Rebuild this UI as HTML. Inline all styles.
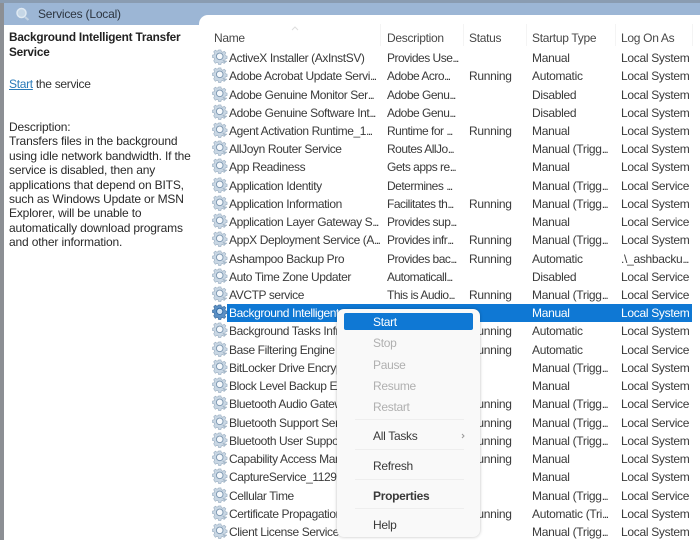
<!DOCTYPE html>
<html><head><meta charset="utf-8"><style>
html,body{margin:0;padding:0;background:#fff}
#p{position:relative;width:700px;height:540px;overflow:hidden;background:#fff;font-family:"Liberation Sans",sans-serif;font-size:12px;letter-spacing:-.3px;color:#3a3a3a;filter:blur(.3px)}
#p div{position:absolute;white-space:nowrap}
.r{left:0;width:700px;height:18px;line-height:18px}
.r span{position:absolute;top:0}
.r i{font-style:normal;letter-spacing:-1.5px}
.n{left:229px;letter-spacing:-.4px}.d{left:387px;letter-spacing:-.5px}.s{left:469px}.t{left:532px}.l{left:621px}
.r svg{position:absolute;left:212px;top:0;width:16px;height:16px}
.h{top:30px;line-height:16px;color:#484848}
.sep{top:24px;width:1px;height:22px;background:#f4f4f4}
.m{left:373px;line-height:16px;color:#3a3a3a}
.g{color:#b0b0b0}
.ms{left:355px;width:109px;height:1px;background:#eeeeee}
.dt{left:9px;line-height:14.4px;color:#2a2a2a;letter-spacing:-.16px}
</style></head><body><div id="p">
<svg width="0" height="0" style="position:absolute"><defs>
<symbol id="g" viewBox="0 0 17 17">
<path d="M7 1h2.500l.4 1.800 1.500.6 1.600-1 1.700 1.700-1 1.600.6 1.500 1.700.4v2.500l-1.800.4-.6 1.500 1 1.600-1.700 1.700-1.600-1-1.500.6-.4 1.600H7l-.4-1.700-1.500-.6-1.600 1L1.800 12.500l1-1.600-.6-1.500L.5 9V6.500l1.700-.4.6-1.500-1-1.600L3.500 1.300l1.600 1 1.500-.6z" fill="#c9d7e4" stroke="#9fb2c4" stroke-width=".7"/>
<circle cx="8.200" cy="7.800" r="3.500" fill="#f6f9fc" stroke="#7f99b2" stroke-width="1"/>
<path d="M11.500 11.500l1.800 2.300 2.500-1" fill="none" stroke="#a5b7c7" stroke-width="1.200"/>
</symbol>
<symbol id="g2" viewBox="0 0 17 17">
<path d="M7 1h2.500l.4 1.800 1.500.6 1.600-1 1.700 1.700-1 1.600.6 1.500 1.700.4v2.500l-1.800.4-.6 1.500 1 1.600-1.700 1.700-1.600-1-1.500.6-.4 1.600H7l-.4-1.700-1.500-.6-1.600 1L1.800 12.500l1-1.600-.6-1.500L.5 9V6.500l1.700-.4.6-1.500-1-1.600L3.500 1.300l1.600 1 1.500-.6z" fill="#5b8fc4" stroke="#3f6f9f" stroke-width=".7"/>
<circle cx="8.200" cy="7.800" r="3.300" fill="#cfe3f5" stroke="#2f6aa5" stroke-width="1"/>
</symbol></defs></svg>

<div style="left:0;top:0;width:700px;height:3px;background:#8a9cb1"></div>
<div style="left:0;top:3px;width:700px;height:22px;background:#9cb6d5"></div>
<div style="left:0;top:3px;width:4px;height:537px;background:#8c8f94"></div>
<div style="left:4px;top:25px;width:196px;height:515px;background:#fff"></div>
<div style="left:199px;top:15px;width:501px;height:525px;background:#fff;border-radius:9px 0 0 0"></div>

<svg style="position:absolute;left:14px;top:6px" width="17" height="17" viewBox="0 0 17 17"><circle cx="7.500" cy="7" r="4.500" fill="#c5d6e6" stroke="#dfe9f2" stroke-width="1.500"/><path d="M11 11l3.500 3" stroke="#c2d2e2" stroke-width="2"/></svg>
<div style="left:38px;top:6px;line-height:16px;font-size:12px;color:#2c3540;letter-spacing:-.2px">Services (Local)</div>

<div style="left:9px;top:30px;font-weight:bold;line-height:15px;color:#222;letter-spacing:-.2px;font-size:11.800px">Background Intelligent Transfer<br>Service</div>
<div style="left:9px;top:76px;line-height:16px;color:#333"><span style="color:#2a7ab8;text-decoration:underline">Start</span> the service</div>
<div class="dt" style="top:120px">Description:<br>Transfers files in the background<br>using idle network bandwidth. If the<br>service is disabled, then any<br>applications that depend on BITS,<br>such as Windows Update or MSN<br>Explorer, will be unable to<br>automatically download programs<br>and other information.</div>

<div class="h" style="left:214px">Name</div><div class="h" style="left:387px">Description</div><div class="h" style="left:469px">Status</div><div class="h" style="left:532px">Startup Type</div><div class="h" style="left:621px">Log On As</div>
<div class="sep" style="left:380px"></div><div class="sep" style="left:463px"></div><div class="sep" style="left:526px"></div><div class="sep" style="left:615px"></div><div class="sep" style="left:692px"></div>
<svg style="position:absolute;left:291px;top:26px" width="8" height="5"><path d="M1 4l3-3 3 3" fill="none" stroke="#ddd"/></svg>

<div class="r" style="top:49px"><svg><use href="#g"/></svg><span class="n">ActiveX Installer (AxInstSV)</span><span class="d">Provides Use<i>...</i></span><span class="t">Manual</span><span class="l">Local System</span></div>
<div class="r" style="top:67.200px"><svg><use href="#g"/></svg><span class="n">Adobe Acrobat Update Servi<i>...</i></span><span class="d">Adobe Acro<i>...</i></span><span class="s">Running</span><span class="t">Automatic</span><span class="l">Local System</span></div>
<div class="r" style="top:85.500px"><svg><use href="#g"/></svg><span class="n">Adobe Genuine Monitor Ser<i>...</i></span><span class="d">Adobe Genu<i>...</i></span><span class="t">Disabled</span><span class="l">Local System</span></div>
<div class="r" style="top:103.700px"><svg><use href="#g"/></svg><span class="n">Adobe Genuine Software Int<i>...</i></span><span class="d">Adobe Genu<i>...</i></span><span class="t">Disabled</span><span class="l">Local System</span></div>
<div class="r" style="top:121.900px"><svg><use href="#g"/></svg><span class="n">Agent Activation Runtime_1<i>...</i></span><span class="d">Runtime for <i>...</i></span><span class="s">Running</span><span class="t">Manual</span><span class="l">Local System</span></div>
<div class="r" style="top:140.200px"><svg><use href="#g"/></svg><span class="n">AllJoyn Router Service</span><span class="d">Routes AllJo<i>...</i></span><span class="t">Manual (Trigg<i>...</i></span><span class="l">Local System</span></div>
<div class="r" style="top:158.400px"><svg><use href="#g"/></svg><span class="n">App Readiness</span><span class="d">Gets apps re<i>...</i></span><span class="t">Manual</span><span class="l">Local System</span></div>
<div class="r" style="top:176.600px"><svg><use href="#g"/></svg><span class="n">Application Identity</span><span class="d">Determines <i>...</i></span><span class="t">Manual (Trigg<i>...</i></span><span class="l">Local Service</span></div>
<div class="r" style="top:194.800px"><svg><use href="#g"/></svg><span class="n">Application Information</span><span class="d">Facilitates th<i>...</i></span><span class="s">Running</span><span class="t">Manual (Trigg<i>...</i></span><span class="l">Local System</span></div>
<div class="r" style="top:213.100px"><svg><use href="#g"/></svg><span class="n">Application Layer Gateway S<i>...</i></span><span class="d">Provides sup<i>...</i></span><span class="t">Manual</span><span class="l">Local Service</span></div>
<div class="r" style="top:231.300px"><svg><use href="#g"/></svg><span class="n">AppX Deployment Service (A<i>...</i></span><span class="d">Provides infr<i>...</i></span><span class="s">Running</span><span class="t">Manual (Trigg<i>...</i></span><span class="l">Local System</span></div>
<div class="r" style="top:249.500px"><svg><use href="#g"/></svg><span class="n">Ashampoo Backup Pro</span><span class="d">Provides bac<i>...</i></span><span class="s">Running</span><span class="t">Automatic</span><span class="l">.\_ashbacku<i>...</i></span></div>
<div class="r" style="top:267.800px"><svg><use href="#g"/></svg><span class="n">Auto Time Zone Updater</span><span class="d">Automaticall<i>...</i></span><span class="t">Disabled</span><span class="l">Local Service</span></div>
<div class="r" style="top:286px"><svg><use href="#g"/></svg><span class="n">AVCTP service</span><span class="d">This is Audio<i>...</i></span><span class="s">Running</span><span class="t">Manual (Trigg<i>...</i></span><span class="l">Local Service</span></div>

<div style="left:227px;top:304px;width:465px;height:18px;background:#0f78d4"></div>
<div class="r" style="top:304.200px;color:#fff"><svg><use href="#g2"/></svg><span class="n">Background Intelligent</span><span class="t">Manual</span><span class="l">Local System</span></div>

<div class="r" style="top:322.400px"><svg><use href="#g"/></svg><span class="n">Background Tasks Infrastructure</span><span class="s">Running</span><span class="t">Automatic</span><span class="l">Local System</span></div>
<div class="r" style="top:340.700px"><svg><use href="#g"/></svg><span class="n">Base Filtering Engine</span><span class="s">Running</span><span class="t">Automatic</span><span class="l">Local Service</span></div>
<div class="r" style="top:358.900px"><svg><use href="#g"/></svg><span class="n">BitLocker Drive Encryption</span><span class="t">Manual (Trigg<i>...</i></span><span class="l">Local System</span></div>
<div class="r" style="top:377.100px"><svg><use href="#g"/></svg><span class="n">Block Level Backup Engine</span><span class="t">Manual</span><span class="l">Local System</span></div>
<div class="r" style="top:395.400px"><svg><use href="#g"/></svg><span class="n">Bluetooth Audio Gateway</span><span class="s">Running</span><span class="t">Manual (Trigg<i>...</i></span><span class="l">Local Service</span></div>
<div class="r" style="top:413.600px"><svg><use href="#g"/></svg><span class="n">Bluetooth Support Service</span><span class="s">Running</span><span class="t">Manual (Trigg<i>...</i></span><span class="l">Local Service</span></div>
<div class="r" style="top:431.800px"><svg><use href="#g"/></svg><span class="n">Bluetooth User Support</span><span class="s">Running</span><span class="t">Manual (Trigg<i>...</i></span><span class="l">Local System</span></div>
<div class="r" style="top:450px"><svg><use href="#g"/></svg><span class="n">Capability Access Manager</span><span class="s">Running</span><span class="t">Manual</span><span class="l">Local System</span></div>
<div class="r" style="top:468.300px"><svg><use href="#g"/></svg><span class="n">CaptureService_11297</span><span class="t">Manual</span><span class="l">Local System</span></div>
<div class="r" style="top:486.500px"><svg><use href="#g"/></svg><span class="n">Cellular Time</span><span class="t">Manual (Trigg<i>...</i></span><span class="l">Local Service</span></div>
<div class="r" style="top:504.700px"><svg><use href="#g"/></svg><span class="n">Certificate Propagation</span><span class="s">Running</span><span class="t">Automatic (Tri<i>...</i></span><span class="l">Local System</span></div>
<div class="r" style="top:523px"><svg><use href="#g"/></svg><span class="n">Client License Service</span><span class="t">Manual (Trigg<i>...</i></span><span class="l">Local System</span></div>

<div style="left:337px;top:309px;width:143px;height:228px;background:#f9f9f9;border-radius:7px;box-shadow:0 0 3px rgba(0,0,0,.25)"></div>
<div style="left:344px;top:313px;width:129px;height:17px;background:#0f78d4;border-radius:2px"></div>
<div class="m" style="top:314px;color:#fff">Start</div>
<div class="m g" style="top:335px">Stop</div>
<div class="m g" style="top:357px">Pause</div>
<div class="m g" style="top:378px">Resume</div>
<div class="m g" style="top:399px">Restart</div>
<div class="ms" style="top:419px"></div>
<div class="m" style="top:428px">All Tasks</div>
<svg style="position:absolute;left:461px;top:433px" width="4" height="6"><path d="M1 1l2 2-2 2" fill="none" stroke="#999"/></svg>
<div class="ms" style="top:449px"></div>
<div class="m" style="top:458px">Refresh</div>
<div class="ms" style="top:479px"></div>
<div class="m" style="top:488px;font-weight:bold">Properties</div>
<div class="ms" style="top:508px"></div>
<div class="m" style="top:517px">Help</div>
</div></body></html>
